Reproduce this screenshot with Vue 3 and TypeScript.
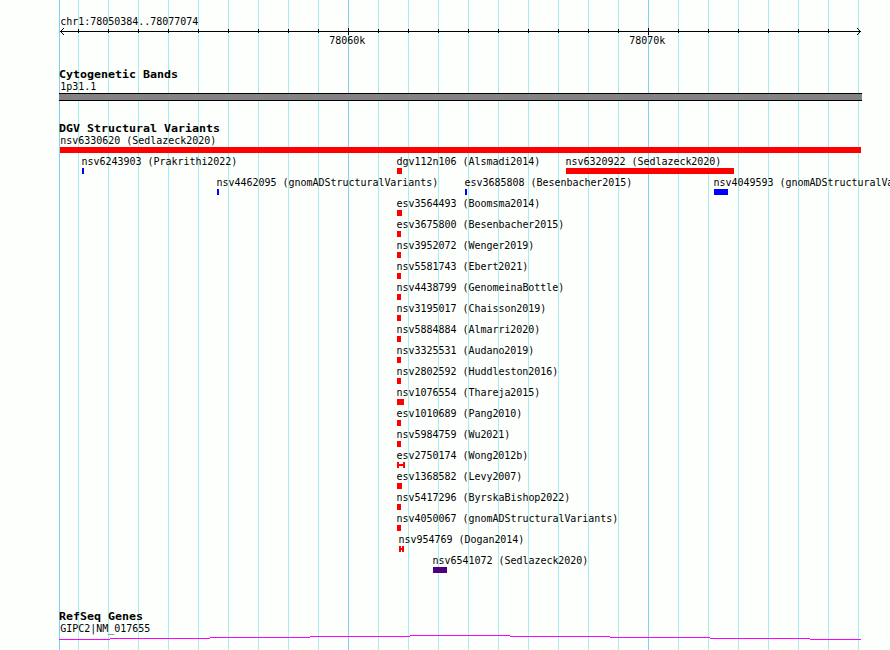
<script setup lang="ts">
type Shape = 'box' | 'span'
interface Variant {
  id: string
  study: string
  row: number
  x: number
  w: number
  color?: string
  shape?: Shape
}

const minorLines: number[] = Array.from({ length: 27 }, (_, i) => 78 + i * 30).filter(
  (x) => x !== 348 && x !== 648,
)
const minorTicks = minorLines.filter((x) => x < 858)
const majorLines = [348, 648]

const variants: Variant[] = [
  { id: 'nsv6330620', study: 'Sedlazeck2020', row: 0, x: 60, w: 801 },
  { id: 'nsv6243903', study: 'Prakrithi2022', row: 1, x: 82, w: 2, color: '#0000ff' },
  { id: 'dgv112n106', study: 'Alsmadi2014', row: 1, x: 397, w: 5 },
  { id: 'nsv6320922', study: 'Sedlazeck2020', row: 1, x: 566, w: 168 },
  { id: 'nsv4462095', study: 'gnomADStructuralVariants', row: 2, x: 217, w: 2, color: '#0000ff' },
  { id: 'esv3685808', study: 'Besenbacher2015', row: 2, x: 465, w: 2, color: '#0000ff' },
  { id: 'nsv4049593', study: 'gnomADStructuralVariants', row: 2, x: 714, w: 14, color: '#0000ff' },
  { id: 'esv3564493', study: 'Boomsma2014', row: 3, x: 397, w: 5 },
  { id: 'esv3675800', study: 'Besenbacher2015', row: 4, x: 397, w: 4 },
  { id: 'nsv3952072', study: 'Wenger2019', row: 5, x: 397, w: 4 },
  { id: 'nsv5581743', study: 'Ebert2021', row: 6, x: 397, w: 4 },
  { id: 'nsv4438799', study: 'GenomeinaBottle', row: 7, x: 397, w: 4 },
  { id: 'nsv3195017', study: 'Chaisson2019', row: 8, x: 397, w: 4 },
  { id: 'nsv5884884', study: 'Almarri2020', row: 9, x: 397, w: 4 },
  { id: 'nsv3325531', study: 'Audano2019', row: 10, x: 397, w: 4 },
  { id: 'nsv2802592', study: 'Huddleston2016', row: 11, x: 397, w: 4 },
  { id: 'nsv1076554', study: 'Thareja2015', row: 12, x: 397, w: 7 },
  { id: 'esv1010689', study: 'Pang2010', row: 13, x: 397, w: 4 },
  { id: 'nsv5984759', study: 'Wu2021', row: 14, x: 397, w: 4 },
  { id: 'esv2750174', study: 'Wong2012b', row: 15, x: 397, w: 8, shape: 'span' },
  { id: 'esv1368582', study: 'Levy2007', row: 16, x: 397, w: 5 },
  { id: 'nsv5417296', study: 'ByrskaBishop2022', row: 17, x: 397, w: 4 },
  { id: 'nsv4050067', study: 'gnomADStructuralVariants', row: 18, x: 397, w: 4 },
  { id: 'nsv954769', study: 'Dogan2014', row: 19, x: 399, w: 5, shape: 'span' },
  { id: 'nsv6541072', study: 'Sedlazeck2020', row: 20, x: 433, w: 14, color: '#4b0082' },
]

const label = (v: Variant): string => `${v.id} (${v.study})`
// A feature touching the left edge keeps its label inside the panel.
const labelX = (v: Variant): number => (v.x === 60 ? 60.3 : v.x - 0.6)
const barTop = (v: Variant): number => 147 + v.row * 21
const variantPath = (v: Variant): string => {
  const y = barTop(v)
  if (v.shape === 'span') {
    return `M${v.x} ${y}h2v2h${v.w - 4}v-2h2v6h-2v-2h-${v.w - 4}v2h-2z`
  }
  return `M${v.x} ${y}h${v.w}v6h-${v.w}z`
}
</script>

<template>
  <svg class="browser" width="890" height="650" viewBox="0 0 890 650">
    <g class="grid">
      <rect v-for="x in minorLines" :key="x" class="minor" :x="x" y="0" width="1" height="650" />
      <rect v-for="x in majorLines" :key="x" class="major" :x="x" y="0" width="1" height="650" />
      <rect class="major" x="59" y="0" width="1" height="650" />
    </g>

    <g class="ruler">
      <rect x="60" y="31" width="801" height="1" />
      <rect v-for="x in minorTicks" :key="x" :x="x" y="29" width="1" height="4" />
      <rect v-for="x in majorLines" :key="x" :x="x" y="28" width="1" height="7" />
      <path
        d="M63 28h1v1h-1zM62 29h1v1h-1zM61 30h1v1h-1zM61 32h1v1h-1zM62 33h1v1h-1zM63 34h1v1h-1z"
      />
      <path
        d="M857 28h1v1h-1zM858 29h1v1h-1zM859 30h1v1h-1zM859 32h1v1h-1zM858 33h1v1h-1zM857 34h1v1h-1z"
      />
      <text class="small" x="60.3" y="25" textLength="138">chr1:78050384..78077074</text>
      <text class="small" x="329.3" y="44" textLength="36">78060k</text>
      <text class="small" x="629.3" y="44" textLength="36">78070k</text>
    </g>

    <g class="bands">
      <text class="title" x="59" y="78" textLength="119" lengthAdjust="spacingAndGlyphs">Cytogenetic Bands</text>
      <text class="small" x="60.3" y="90" textLength="36">1p31.1</text>
      <rect class="band-edge" x="59" y="93" width="803" height="8" />
      <rect class="band" x="59" y="94" width="803" height="6" />
    </g>

    <g class="variants">
      <text class="title" x="59" y="132" textLength="161" lengthAdjust="spacingAndGlyphs">DGV Structural Variants</text>
      <g v-for="v in variants" :key="v.id">
        <text class="small" :x="labelX(v)" :y="144 + v.row * 21" :textLength="label(v).length * 6">{{ label(v) }}</text>
        <path :d="variantPath(v)" :fill="v.color ?? '#ff0000'" />
      </g>
    </g>

    <g class="genes">
      <text class="title" x="59" y="620" textLength="84" lengthAdjust="spacingAndGlyphs">RefSeq Genes</text>
      <text class="small" x="60.3" y="632" textLength="90">GIPC2|NM_017655</text>
      <path
        class="intron"
        d="M59 639.5H110M110 638.5H210M210 637.5H310M310 636.5H410M410 635.5H510M510 636.5H610M610 637.5H710M710 638.5H810M810 639.5H861"
      />
    </g>
  </svg>
</template>

<style scoped>
.browser {
  display: block;
  background: #fdfffc;
}
.grid,
.ruler,
.bands,
.variants,
.genes {
  shape-rendering: crispEdges;
}
.minor {
  fill: #a9eeec;
}
.major {
  fill: #84ceef;
}
.small {
  font: 10px 'DejaVu Sans Mono', 'Liberation Mono', monospace;
  fill: #000;
  white-space: pre;
}
.title {
  font: bold 11px 'DejaVu Sans Mono', 'Liberation Mono', monospace;
  fill: #000;
  white-space: pre;
}
.band-edge {
  fill: #000;
}
.band {
  fill: #848284;
}
.intron {
  fill: none;
  stroke: #ff00ff;
  stroke-width: 1;
}
</style>
